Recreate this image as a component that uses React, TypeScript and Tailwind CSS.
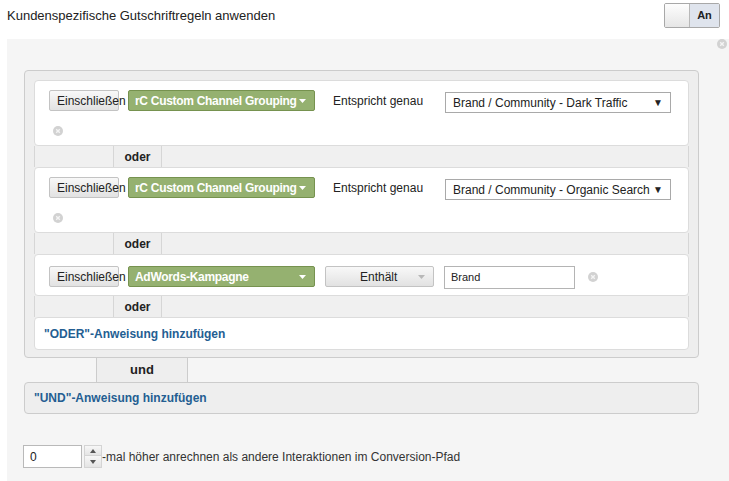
import { Fragment } from "react";

function CloseDot({ className = "" }: { className?: string }) {
  return (
    <svg width="10" height="10" viewBox="0 0 10 10" className={className}>
      <circle cx="5" cy="5" r="5" fill="#d2d2d2" />
      <path d="M3.2 3.2 L6.8 6.8 M6.8 3.2 L3.2 6.8" stroke="#f4f4f4" strokeWidth="1.4" />
    </svg>
  );
}

function IncludeButton() {
  return (
    <div className="w-[70px] shrink-0 h-[21px] flex items-center pl-[7px] whitespace-nowrap overflow-visible border border-[#c3c3c3] rounded-[2px] bg-gradient-to-b from-[#f8f8f8] to-[#e2e2e2] text-[#222]">
      Einschließen
    </div>
  );
}

function GreenDropdown({ label }: { label: string }) {
  return (
    <div className="ml-[9px] w-[187px] shrink-0 h-[21px] flex items-center justify-between pl-[6px] pr-[8px] bg-[#95b170] border border-[#76924f] rounded-[2px] text-white font-bold">
      <span className="whitespace-nowrap tracking-[-0.3px]">{label}</span>
      <svg width="7" height="4" viewBox="0 0 7 4" className="shrink-0 ml-[2px]">
        <path d="M0 0 L7 0 L3.5 4 Z" fill="#ffffff" />
      </svg>
    </div>
  );
}

function MatchRule({ value }: { value: string }) {
  return (
    <div className="h-[66px] bg-white border border-[#dcdcdc] rounded-[4px] pt-[9px] pl-[14px]">
      <div className="flex items-start">
        <IncludeButton />
        <GreenDropdown label="rC Custom Channel Grouping" />
        <div className="ml-[18px] w-[112px] h-[21px] flex items-center pt-[1px] text-[#222]">Entspricht genau</div>
        <div className="mt-[2px] w-[226px] h-[21px] flex items-center justify-between pl-[7px] pr-[7px] border border-[#a9a9a9] bg-white text-[#222]">
          <span>{value}</span>
          <span className="text-[10px]">▼</span>
        </div>
      </div>
      <div className="mt-[13px] ml-[4px]">
        <CloseDot />
      </div>
    </div>
  );
}

function ContainsRule() {
  return (
    <div className="h-[42px] bg-white border border-[#dcdcdc] rounded-[4px] pt-[9px] pl-[14px]">
      <div className="flex items-center">
        <IncludeButton />
        <GreenDropdown label="AdWords-Kampagne" />
        <div className="ml-[10px] w-[109px] h-[21px] flex items-center justify-between pl-[34px] pr-[8px] border border-[#c3c3c3] rounded-[2px] bg-gradient-to-b from-[#f8f8f8] to-[#e2e2e2] text-[#222]">
          <span>Enthält</span>
          <svg width="7" height="4" viewBox="0 0 7 4">
            <path d="M0 0 L7 0 L3.5 4 Z" fill="#b8b8b8" />
          </svg>
        </div>
        <div className="ml-[10px] mt-[2px] w-[131px] h-[23px] flex items-center pl-[6px] border border-[#b4b4b4] bg-white text-[11px] text-[#222]">
          Brand
        </div>
        <CloseDot className="ml-[13px]" />
      </div>
    </div>
  );
}

function OrJoint() {
  return (
    <div className="h-[21px] flex">
      <div className="w-[80px] border-x border-[#d6d6d6] bg-[#f0f0f0]" />
      <div className="w-[47px] flex items-center justify-center text-[12px] font-bold text-[#222]">oder</div>
      <div className="flex-1 border-x border-[#d6d6d6] bg-[#f0f0f0]" />
    </div>
  );
}

export default function App() {
  const rules = [
    <MatchRule value="Brand / Community - Dark Traffic" />,
    <MatchRule value="Brand / Community - Organic Search" />,
    <ContainsRule />,
  ];

  return (
    <div
      className="w-[729px] h-[481px] bg-white text-[12px] text-[#222] overflow-hidden"
      style={{ fontFamily: '"Liberation Sans", Arial, sans-serif' }}
    >
      <div className="h-[39px] flex items-start justify-between pl-[7px] pr-[9px] pt-[3px]">
        <div className="leading-[26px] text-[13px] text-[#222]">Kundenspezifische Gutschriftregeln anwenden</div>
        <div className="flex h-[25px] border border-[#a8a8a8] rounded-[2px] overflow-hidden">
          <div className="w-[25px] bg-gradient-to-b from-[#fdfdfd] to-[#e6e6e6] border-r border-[#b8b8b8]" />
          <div className="w-[29px] flex items-center justify-center bg-[#dfe4ed] text-[11px] font-bold text-[#222]">An</div>
        </div>
      </div>

      <div className="ml-[7px] h-[442px] bg-[#f5f5f5] flex flex-col">
        <div className="h-[31px] flex justify-end pr-[2px]">
          <CloseDot />
        </div>

        <div className="ml-[17px] w-[675px] flex flex-col">
          <div className="bg-[#eeeeee] border border-[#cccccc] rounded-[4px] pt-[9px] px-[9px] pb-[7px]">
            {rules.map((r, i) => (
              <Fragment key={i}>
                {r}
                <OrJoint />
              </Fragment>
            ))}
            <div className="h-[33px] bg-white border border-[#dcdcdc] rounded-[4px] flex items-center pl-[9px] font-bold text-[#245e92]">
              "ODER"-Anweisung hinzufügen
            </div>
          </div>

          <div className="h-[24px] flex">
            <div className="w-[73px] bg-[#f5f5f5] border-r border-[#cccccc]" />
            <div className="w-[90px] flex items-center justify-center bg-[#eeeeee] text-[13px] font-bold text-[#222]">und</div>
            <div className="flex-1 bg-[#f5f5f5] border-l border-[#cccccc]" />
          </div>

          <div className="h-[32px] bg-[#eeeeee] border border-[#cccccc] rounded-[4px] flex items-center pl-[9px] font-bold text-[#245e92]">
            "UND"-Anweisung hinzufügen
          </div>
        </div>

        <div className="mt-[31px] ml-[16px] flex items-center">
          <div className="w-[59px] h-[23px] flex items-center pl-[6px] border border-[#b9b9b9] bg-white text-[#222]">0</div>
          <div className="ml-[2px] w-[18px] h-[23px] flex flex-col">
            <div className="h-[11px] flex items-center justify-center bg-gradient-to-b from-[#f7f7f7] to-[#e4e4e4] border border-[#d4d4d4]">
              <svg width="6" height="4" viewBox="0 0 6 4"><path d="M0 4 L6 4 L3 0 Z" fill="#555" /></svg>
            </div>
            <div className="h-[12px] flex items-center justify-center bg-gradient-to-b from-[#f7f7f7] to-[#e4e4e4] border border-[#d4d4d4] border-t-0">
              <svg width="6" height="4" viewBox="0 0 6 4"><path d="M0 0 L6 0 L3 4 Z" fill="#555" /></svg>
            </div>
          </div>
          <div className="text-[#333]">-mal höher anrechnen als andere Interaktionen im Conversion-Pfad</div>
        </div>
      </div>
    </div>
  );
}
